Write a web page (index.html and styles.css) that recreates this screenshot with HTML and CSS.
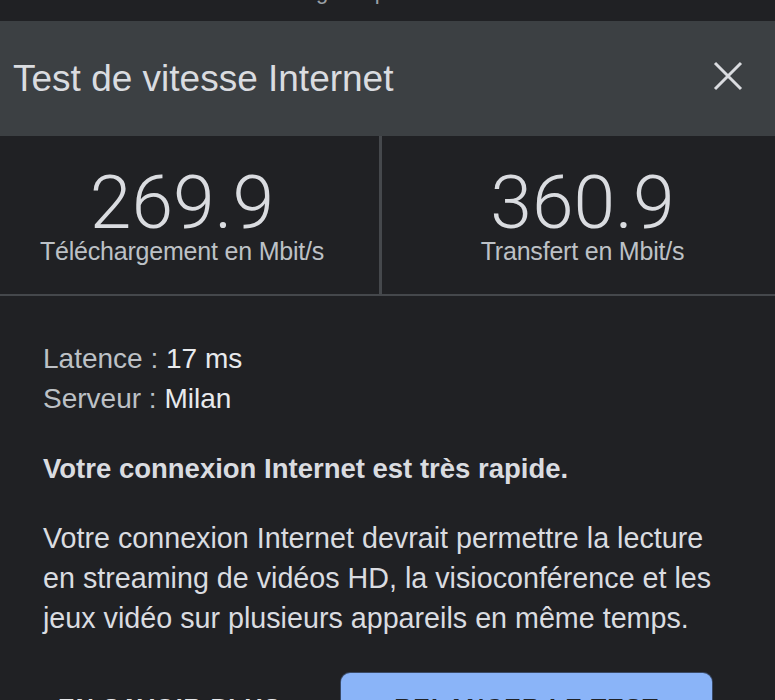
FILE: index.html
```html
<!DOCTYPE html>
<html lang="fr">
<head>
    <meta charset="UTF-8">
    <meta name="viewport" content="width=device-width, initial-scale=1.0">
    <title>Test de vitesse Internet</title>
    <link rel="stylesheet" href="styles.css">
</head>
<body>
    <div class="status-strip">
        <span class="status-text">g.co/speedtest</span>
    </div>

    <div class="sheet-header">
        <h1 class="sheet-title">Test de vitesse Internet</h1>
        <button class="close-btn" aria-label="Fermer">
            <svg width="30" height="30" viewBox="0 0 30 30">
                <path d="M2 2 L28 28 M28 2 L2 28" stroke="#dadce0" stroke-width="3" fill="none"/>
            </svg>
        </button>
    </div>

    <div class="stats">
        <div class="stat stat-down">
            <div class="stat-value">269.9</div>
            <div class="stat-label">Téléchargement en Mbit/s</div>
        </div>
        <div class="stat stat-up">
            <div class="stat-value">360.9</div>
            <div class="stat-label">Transfert en Mbit/s</div>
        </div>
    </div>

    <div class="details">
        <div class="info-line"><span class="info-key">Latence :</span> 17 ms</div>
        <div class="info-line"><span class="info-key">Serveur :</span> Milan</div>

        <p class="verdict">Votre connexion Internet est très rapide.</p>

        <p class="description">
            Votre connexion Internet devrait permettre la lecture
            en streaming de vidéos HD, la visioconférence et les
            jeux vidéo sur plusieurs appareils en même temps.
        </p>

        <div class="actions">
            <button class="btn text-btn">EN SAVOIR PLUS</button>
            <button class="btn primary-btn">RELANCER LE TEST</button>
        </div>
    </div>
</body>
</html>
```

FILE: styles.css
```css
body {
    margin: 0;
    padding: 0;
    background-color: #202124;
    font-family: 'Liberation Sans', Arial, sans-serif;
    color: #e8eaed;
    overflow: hidden;
}

.status-strip {
    height: 21px;
    overflow: hidden;
    display: flex;
    justify-content: center;
}

.status-text {
    display: block;
    margin-top: -19px;
    font-size: 22px;
    line-height: 22px;
    color: #9aa0a6;
}

.sheet-header {
    height: 115px;
    background-color: #3c4043;
    display: flex;
    align-items: center;
    justify-content: space-between;
    padding: 0 32px 0 13px;
}

.sheet-title {
    margin: 0;
    font-size: 37px;
    font-weight: normal;
    color: #dadce0;
}

.close-btn {
    background: none;
    border: none;
    padding: 0;
    width: 30px;
    height: 30px;
    margin-top: -5px;
    cursor: pointer;
}

.stats {
    display: flex;
    border-bottom: 2px solid #45484c;
    height: 158px;
}

.stat {
    display: flex;
    flex-direction: column;
    align-items: center;
    justify-content: center;
}

.stat-down {
    flex: 0 0 364px;
    border-right: 3px solid #45484c;
    padding-right: 15px;
}

.stat-up {
    flex: 1;
    padding-left: 8px;
}

.stat-value {
    font-family: Roboto, 'Liberation Sans', sans-serif;
    font-weight: 300;
    font-size: 75px;
    line-height: 66px;
    color: #dadce0;
    margin-top: 6px;
}

.stat-label {
    font-size: 25px;
    line-height: 32px;
    color: #bdc1c6;
    letter-spacing: -0.2px;
}

.details {
    padding: 43px 43px 0 43px;
}

.info-line {
    font-size: 28px;
    line-height: 40px;
    color: #e8eaed;
}

.info-key {
    color: #bdc1c6;
}

.verdict {
    margin: 30px 0 0 0;
    font-size: 27.5px;
    line-height: 40px;
    font-weight: bold;
    color: #dadce0;
}

.description {
    margin: 29px 0 0 0;
    font-size: 28.7px;
    line-height: 40px;
    color: #dadce0;
}

.actions {
    display: flex;
    align-items: flex-start;
    margin-top: 35px;
}

.btn {
    font-family: 'Liberation Sans', Arial, sans-serif;
    font-size: 25px;
    font-weight: bold;
    letter-spacing: 1px;
    border: none;
    cursor: pointer;
}

.text-btn {
    background: none;
    color: #e8eaed;
    padding: 21px 15px;
    width: 298px;
    text-align: left;
}

.primary-btn {
    background-color: #8ab4f8;
    color: #202124;
    width: 371px;
    padding: 21px 10px;
    border-radius: 9px;
    box-shadow: 0 0 0 1px #3a4a66;
}
```
